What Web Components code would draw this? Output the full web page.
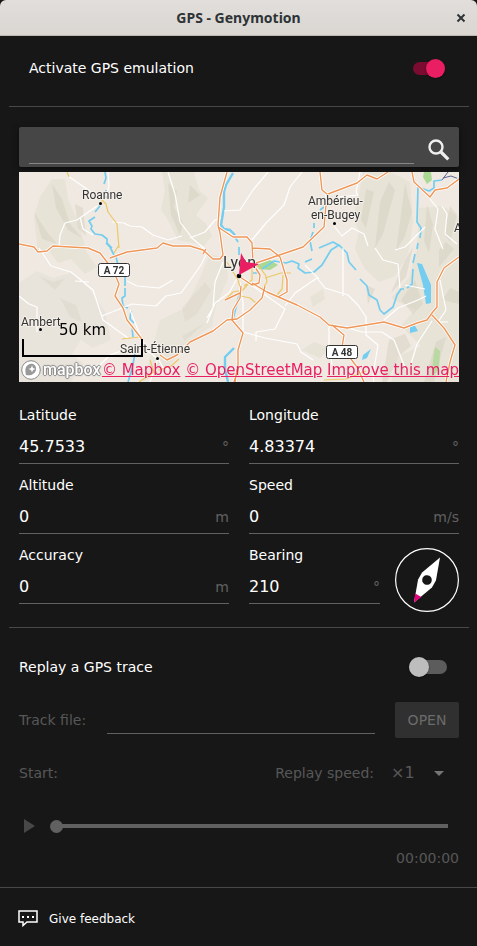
<!DOCTYPE html>
<html lang="en">
<head>
<meta charset="utf-8">
<meta name="viewport" content="width=device-width, initial-scale=1">
<title>GPS - Genymotion</title>
<style>
  body {
    margin: 0;
    background: #171717;
    color: #fff;
    font-family: "DejaVu Sans", sans-serif;
    font-size: 14px;
    line-height: 18px;
  }
</style>
</head>
<body>
<gps-window></gps-window>

<script>
function define(name, html, setup) {
  const template = document.createElement('template')
  template.innerHTML = html

  customElements.define(name, class extends HTMLElement {
    constructor() {
      super()
      this.attachShadow({ mode: 'open' })
        .append(template.content.cloneNode(true))
    }

    connectedCallback() {
      if (setup) setup(this, this.shadowRoot)
    }
  })
}

define('title-bar', `
  <style>
    :host {
      display: grid;
      grid-template-columns: 32px 1fr 32px;
      align-items: center;
      block-size: 36px;
      box-sizing: border-box;
      border-block-end: 1px solid #bfb8b1;
      border-radius: 6px 6px 0 0;
      background: linear-gradient(#e1dedb, #dad6d2);
      color: #2e3436;
    }
    h1 {
      grid-column: 2;
      margin: 0;
      text-align: center;
      font: bold 14px/20px "Noto Sans", sans-serif;
    }
    button {
      display: grid;
      place-items: center;
      block-size: 32px;
      padding: 0;
      border: 0;
      background: none;
      color: inherit;
    }
  </style>
  <h1><slot></slot></h1>
  <button type="button" aria-label="Close">
    <svg width="10" height="10" viewBox="0 0 10 10" stroke="currentColor" stroke-width="2">
      <path d="M1.500 1.500l7 7M8.500 1.500l-7 7"/>
    </svg>
  </button>
`)

define('toggle-switch', `
  <style>
    :host {
      display: flex;
      align-items: center;
      justify-content: space-between;
    }
    input {
      appearance: none;
      position: relative;
      display: flex;
      align-items: center;
      inline-size: 38px;
      block-size: 14px;
      margin: 0;
      border-radius: 7px;
      background: #5c5c5c;
    }
    input::before {
      content: "";
      inline-size: 20px;
      block-size: 20px;
      flex: none;
      border-radius: 50%;
      background: #bdbdbd;
      box-shadow: 0 1px 2px #0006;
    }
    input:checked {
      justify-content: flex-end;
      inline-size: 32px;
      block-size: 13px;
      background: #7b0b30;
    }
    input:checked::before {
      inline-size: 19px;
      block-size: 19px;
      background: #e91e63;
    }
  </style>
  <label for="toggle"><slot></slot></label>
  <input id="toggle" type="checkbox" role="switch">
`, (host, root) => {
  root.querySelector('input').checked = host.hasAttribute('checked')
})

define('search-box', `
  <style>
    :host {
      display: flex;
      gap: 13px;
      block-size: 40px;
      box-sizing: border-box;
      padding: 3px 9px 3px 10px;
      border-radius: 2px;
      background: #464646;
      box-shadow: 0 2px 6px #0008;
    }
    input {
      flex: 1;
      min-inline-size: 0;
      padding: 0;
      border: 0;
      border-block-end: 1px solid #858585;
      background: none;
      color: #fff;
      font: 16px "DejaVu Sans", sans-serif;
      outline: 0;
    }
    button {
      display: flex;
      align-items: flex-end;
      padding: 0 0 3px;
      border: 0;
      background: none;
    }
  </style>
  <input type="search" aria-label="Search a location">
  <button type="button" aria-label="Search">
    <svg width="23" height="23" viewBox="0 0 23 23" fill="none" stroke="#eee">
      <circle cx="9" cy="9" r="6.500" stroke-width="2.400"/>
      <path d="M13.500 13.500l7.800 7.800" stroke-width="3.200"/>
    </svg>
  </button>
`)

define('location-map', `
  <style>
    :host {
      display: block;
      position: relative;
      block-size: 210px;
      overflow: hidden;
      background: #efe9e1;
    }
    .map {
      display: block;
      inline-size: 100%;
      block-size: 100%;
    }
    .scale {
      position: absolute;
      inset: auto auto 25px 3px;
      inline-size: 121px;
      box-sizing: border-box;
      color: #000;
      text-align: center;
      font-size: 15px;
    }
    .scale::after {
      content: "";
      display: block;
      block-size: 16px;
      border: solid #000;
      border-width: 0 2px 2px;
    }
    .logo {
      position: absolute;
      inset: auto auto 2px 2px;
      display: flex;
      align-items: center;
      gap: 2px;
      font: 500 16px/20px Roboto, sans-serif;
      color: #fff;
      text-shadow: 0 0 1px #888, 1px 0 1px #888, -1px 0 1px #888, 0 1px 1px #888, 0 -1px 1px #888;
    }
    .credits {
      position: absolute;
      inset: auto 0 2px auto;
      white-space: nowrap;
      font-size: 15px;
      line-height: 20px;
    }
    a { color: #e91e63; }
  </style>
  <svg class="map" viewBox="19 172 440 210" preserveAspectRatio="xMidYMid slice" fill="none" stroke-linejoin="round">
    <rect x="19" y="172" width="440" height="210" fill="#efe9e1"/>

    <!-- relief -->
    <g fill="#e5e1d5" opacity=".8">
      <path d="M34 217l6-20 12-18h13l3 20 11 26 8 28 10 14-12 7-14-15-13 4-10-14-10 3z"/>
      <path d="M19 283l18-12 16 7 20-6 17 18 15 22 6 28-18 8-12-8-9 14 12 10-13 18H19z" opacity=".7"/>
      <path d="M162 172h32l5 18 9 8-12 17 10 9 6 12-8 10-14-4-12-2-11-22-6-8 4-20z"/>
      <path d="M160 320l25-12 15-30 10-24 16 4 2 20-12 28-4 20-26 18-15 20-28 18z" opacity=".8"/>
      <path d="M363 172h27l20 10 3 40-5 32-13 22-16 6-14-13-10-20 4-18-6-12 6-26z"/>
      <path d="M391 298l18-20 8-30 2-40 24-2 16 12v164h-68l8-26 22-10-20-20 14-16z"/>
      <path d="M310 297l13-8 2 10-12 8zM302 350l12-8 16 6-10 10z"/>
    </g>
    <g fill="#d6d1bf" opacity=".5">
      <path d="M52 184l10 15 8 25 12 14-14-8-12-22zM34 212l13 20 10 12-15-5zM75 204l8 4 3 28-8-8z"/>
      <path d="M168 183l9 8-3 16 9 16-3 12-9-20zM190 185l10 10-12 8z"/>
      <path d="M366 189l8 3-8 36-5-8zM380 202l9-20 6 8-12 44-8 14zM405 184l7 28-7 24-9 15z"/>
      <path d="M427 205l6 20-4 28-5-12zM450 206l7 9-7 27-6-8zM439 250l7-8 8 7-15 18zM405 260l8-13-7 30-15 16zM401 300l14-20 8 24-10 10z"/>
      <path d="M442 300l8-12 9 4v12zM436 342l-12 40h10l12-45zM366 285l9 4-7 15zM389 340l16-6 6 12-12 10-12 26h-5z"/>
      <path d="M182 308l23-26 6 8-14 24-12 8zM182 336l23-13-20 18zM60 298l16 7 6 17-12-5zM39 276l14 6 12-4-10 12z" opacity=".6"/>
    </g>
    <g fill="#a9d992">
      <path d="M257 265l13-5 8 5-8 5-11-1z"/>
      <path d="M424 172h7l1 8-5 4-4-7z"/>
      <path d="M435 347l5 4-1 18-7 8 1-18z" opacity=".7"/>
    </g>

    <!-- water -->
    <g stroke="#73cdf0" stroke-width="1.700">
      <path d="M105 172l1 6-2 6M106 190v8M100 206l-5 6M95 217l-6 4 3 5-1 3 4 5 7 1 5 4v4l5 5M106 243l4 4 4 8M116 257l2 8 4 5 3 6v10M125 288v8l-3 2 1 8 5 2M131 311l-1 8 4 4M132 327l1 10M136 345l-3 20-5 17"/>
      <path d="M233 173l-7 12-2 7v15l-3 18 3 4 6 1 5 5" stroke-width="2.400"/>
      <path d="M235 237l3 5M239 247v8"/>
      <path d="M253 273h6M262 269l12-8 12 2 6-2 7 3-1 4 7 5 9-1 8-7 9-15 8-5 8 8 2 9 7 8M360 279l7 7 2 9 8 5 3 10 4 4 9-7 4-12 4-6h3M407 288l5-4 1-15M413 263l2-9M417 249l1-6M420 238l1-10-4-6 1-35 11 4 5-3v-7l8-1"/>
      <path d="M314 223v5M313 232l-3 9 2 10M305 262l7-3M319 248l14-6 7 4M320 210l4-3"/>
      <path d="M240 294l-4 12-3 12M234 348l-9 9v12l3 13" stroke-width="2.400"/>
    </g>
    <g fill="#73cdf0">
      <path d="M417 263l5 1 9 21v18l-5 1-3-19z"/>
      <path d="M414 324l4 7-8 2v-6zM371 349l-4 9-5 2 1-5z"/>
    </g>
    <path d="M442 180l6-8M443 178l8-2 8 3" stroke="#5d6391"/>

    <!-- minor roads -->
    <g stroke="#fff" stroke-width="1.200">
      <path d="M68 176l32 22M97 206l-20 14-12 3-5 12-1 12M80 217l3 12 10 6M112 222l12 1 6 3 12 1 11 8 15 5 14-4M168 172l7 22 5 28 13 17 12 10M190 238l15-6 10-12 6-2"/>
      <path d="M19 296l10 8 8 3v25M39 248l12 18 20 6 22 18 10 30 25 18M75 281l14 1M102 316l30-12 24 2 10-10 15-3 20-28 5-10M127 281l10 5 22 2 14-8M124 350l-14 5-10 10-16 2"/>
      <path d="M108 172l1 14-3 10M130 310l10 25 8 16 10 8M150 382l8-24 5 10 10 2M239 275l-10 18-14 10-8 20M223 262l-8 20-2 26-6 10"/>
      <path d="M302 172l-12 15-6 18-18 18-14 17M268 172l-15 18-13 20-16 1M360 172l-4 20 2 3-20 2M334 226l8 10 10-8 12 6 4 12"/>
      <path d="M240 282l3 20v30l22 6 32 6 4 8 12 8M250 284l35 25-10 20-19 3v9M285 306l10-13 22-15 8 10 23 7 10 10 8 12v18l12 10-5 30 3 28M305 265l14 14M343 248v48M329 325v20l3 20M337 325l25 7h20l12 8 12 30M384 320l14-12 20-8 8-4M432 321l-15 23-6 20"/>
      <path d="M375 248l8 12 15 4 2 24M395 250l10-3 20-20M430 199l8 10-3 20 8 20M442 206l5 8-2 20 12 10M425 289l-20-4M440 280l6 30-8 12h10"/>
    </g>

    <!-- secondary roads -->
    <g stroke="#edc866" stroke-width="1.200">
      <path d="M67 172l2 5M101 199l5 5 2 8 9 12 2 24M119 245l-5 8M122 339l18-2M139 382l15-10-4-12M159 370l12-4 8-7M227 262l11 18 3 10M251 267l8-1 7 10 1 6-4 6-15-4-5 6-10 2-8 8M252 268v12l-8 6M265 278l16-5h10M283 275l-1 14-5 6M241 296l9 2 6 5M324 380l22-1 20-8"/>
    </g>

    <!-- motorways -->
    <g id="motorways">
      <path d="M19 244l15 3 4 5 9-1 6-5 35 2 12 5 7 9 6 8 6 14-4 12 8 12 4 12 14 18 3 12M110 258l17-6 30-4 6-5 10 3 17 0 13 4 10 9 7 0 3-4-3-22-2-8 2-28 7-25"/>
      <path d="M160 355l7 5 10-5 13-13 23-11 14-11 10-1 13-9 12-12 3-12M218 227l15 10h14l5 6 1 20M252 248l18 1 10 8 7 23v12l-9 5M256 263l47-16 21-20 3-33-5-4-2-18M328 194l29-11 10-8 10 4 11-7"/>
      <path d="M252 283l15 9 30 13 23 12 9 8 18 3 37-6 20 6 13-5 10-3 5-7 5-6v-25l7-14 15-11M432 315l12 13 11 17-5 17-4 20M332 325l12 10-2 12 15 20 7 15M412 172l2 10 16 15 5-7 12-2 12-9"/>
      <path d="M241 286l-1 12-7 12-1 10 11 13-5 17v20l-4 12M253 264l7 11-1 8-7 2-12-8M225 300l15-7M203 254l3-5M235 382l2-13"/>
    </g>

    <g fill="#333" stroke="#f5f0ea" stroke-width="2" paint-order="stroke" font-family="Roboto, sans-serif" font-size="12">
      <text x="82" y="199">Roanne</text>
      <text x="308" y="205">Ambérieu-</text>
      <text x="311" y="219">en-Bugey</text>
      <text x="21" y="326">Ambert</text>
      <text x="120" y="353">Saint-Étienne</text>
      <text x="454" y="232">A</text>
      <text x="223" y="268" font-size="16">Lyon</text>
    </g>
    <g fill="#000">
      <circle cx="100.500" cy="203.500" r="1.500"/>
      <circle cx="334.500" cy="223.500" r="1.500"/>
      <circle cx="40.500" cy="329.500" r="1.500"/>
      <circle cx="157.500" cy="358.500" r="1.500"/>
      <circle cx="239" cy="276" r="2.300"/>
    </g>

    <g fill="#fff" stroke="#333">
      <rect x="98.500" y="263.500" width="31" height="13" rx="2"/>
      <rect x="326.500" y="345.500" width="31" height="13" rx="2"/>
    </g>
    <g fill="#333" font-family="Roboto, sans-serif" font-size="10" font-weight="700" text-anchor="middle">
      <text x="114" y="274">A 72</text>
      <text x="342" y="356">A 48</text>
    </g>

    <path d="M241 253l5 9 13 2-20 11z" fill="#e91e63"/>
  </svg>
  <div class="scale">50 km</div>
  <div class="logo">
    <svg width="20" height="20" viewBox="0 0 20 20" fill="#fff">
      <circle cx="10" cy="10" r="9.300" stroke="#888"/>
      <path d="M5 15c-1-5-1-8 2-10 4-3 9 0 8 5-1 4-5 6-10 5z" fill="#999"/>
      <path d="M11 5.500l1 2.500 2.500 1-2.500 1-1 2.500-1-2.500-2.500-1 2.500-1z"/>
    </svg>
    mapbox
  </div>
  <div class="credits">
    <a href="#mapbox">© Mapbox</a> <a href="#osm">© OpenStreetMap</a> <a href="#improve">Improve this map</a>
  </div>
`, (host, root) => {
  // each motorway is an orange line over a wider white one
  const casing = root.getElementById('motorways')
  const line = casing.cloneNode(true)
  line.removeAttribute('id')
  casing.setAttribute('stroke', '#fff')
  casing.setAttribute('stroke-width', '3')
  line.setAttribute('stroke', '#ee9759')
  line.setAttribute('stroke-width', '1.4')
  casing.after(line)
})

define('value-field', `
  <style>
    :host { display: block; }
    label { display: block; }
    .box {
      display: flex;
      align-items: center;
      block-size: 32px;
      margin-block-start: 7px;
      border-block-end: 1px solid #616161;
    }
    input {
      flex: 1;
      min-inline-size: 0;
      inline-size: 0;
      padding: 0;
      border: 0;
      background: none;
      color: #fff;
      font: 16px/20px "DejaVu Sans", sans-serif;
      outline: 0;
    }
    .unit { color: #616161; }
  </style>
  <label for="value"><slot></slot></label>
  <div class="box">
    <input id="value" inputmode="decimal">
    <span class="unit"></span>
  </div>
`, (host, root) => {
  root.querySelector('input').value = host.getAttribute('value')
  root.querySelector('.unit').textContent = host.getAttribute('unit')
})

define('compass-dial', `
  <style>
    :host { display: block; }
    svg { display: block; }
  </style>
  <svg width="64" height="64" viewBox="-32 -32 64 64">
    <circle r="31.400" fill="none" stroke="#fff" stroke-width="1.200"/>
    <g class="needle">
      <path d="M0-26l8 22v8L0 26l-8-22v-8z" fill="#fff"/>
      <path d="M0-26l3.500 8.500h-7z" fill="#e5007d"/>
      <circle r="4.800" fill="#171717"/>
    </g>
  </svg>
`, (host, root) => {
  root.querySelector('.needle').setAttribute('transform', `rotate(${host.getAttribute('bearing')})`)
})

define('track-player', `
  <style>
    :host {
      display: flex;
      flex-direction: column;
      gap: 17px;
      color: #575757;
    }
    .row {
      display: flex;
      align-items: center;
      block-size: 36px;
    }
    input, select, button {
      margin: 0;
      padding: 0;
      border: 0;
      background: none;
      color: inherit;
      font: inherit;
      opacity: 1;
    }
    .file {
      flex: 1;
      min-inline-size: 0;
      block-size: 27px;
      margin-inline: 21px 20px;
      border-block-end: 1px solid #616161;
    }
    .open {
      inline-size: 64px;
      block-size: 36px;
      border-radius: 2px;
      background: #303030;
      color: #6b6b6b;
    }
    .speed-label { margin-inline: auto 17px; }
    .speed {
      position: relative;
      display: flex;
      align-items: center;
      inline-size: 68px;
    }
    select {
      appearance: none;
      inline-size: 100%;
      font-size: 16px;
    }
    .speed svg {
      position: absolute;
      inset-inline-end: 15px;
      pointer-events: none;
    }
    .play {
      display: flex;
      margin-inline: 5px 15px;
    }
    input[type="range"] {
      appearance: none;
      flex: 1;
      min-inline-size: 0;
      margin-inline-end: 11px;
    }
    input[type="range"]::-webkit-slider-runnable-track {
      block-size: 4px;
      background: linear-gradient(90deg, transparent 6px, #616161 6px);
    }
    input[type="range"]::-webkit-slider-thumb {
      appearance: none;
      inline-size: 13px;
      block-size: 13px;
      margin-block-start: -4px;
      border-radius: 50%;
      background: #616161;
    }
    time {
      margin-block-start: -12px;
      text-align: end;
    }
  </style>
  <div class="row">
    <label for="file">Track file:</label>
    <input class="file" id="file" disabled>
    <button class="open" type="button" disabled>OPEN</button>
  </div>
  <div class="row">
    <span>Start:</span>
    <label class="speed-label" for="speed">Replay speed:</label>
    <div class="speed">
      <select id="speed" disabled><option>×1</option></select>
      <svg width="10" height="5" viewBox="0 0 10 5" fill="#757575"><path d="M0 0h10L5 5z"/></svg>
    </div>
  </div>
  <div class="row">
    <button class="play" type="button" aria-label="Play" disabled>
      <svg width="11" height="14" viewBox="0 0 11 14" fill="#484848"><path d="M0 0l11 7-11 7z"/></svg>
    </button>
    <input type="range" aria-label="Position" value="0" disabled>
  </div>
  <time>00:00:00</time>
`)

define('feedback-bar', `
  <style>
    :host {
      display: flex;
      align-items: center;
      block-size: 59px;
      box-sizing: border-box;
      padding: 3px 18px 0;
      border-block-start: 1px solid #484848;
    }
    a {
      display: flex;
      align-items: center;
      gap: 11px;
      color: #fff;
      font-size: 12px;
      text-decoration: none;
    }
  </style>
  <a href="#feedback">
    <svg width="20" height="17" viewBox="0 0 20 17">
      <path d="M1 1h18v11H9l-4 3.500V12H1z" fill="none" stroke="#fff" stroke-width="1.500"/>
      <path d="M4 6h2v2H4zM9 6h2v2H9zM14 6h2v2h-2z" fill="#fff"/>
    </svg>
    <slot></slot>
  </a>
`)

define('gps-window', `
  <style>
    :host {
      display: flex;
      flex-direction: column;
      min-block-size: 100vh;
    }
    main {
      flex: 1;
      padding-inline: 9px 8px;
    }
    section { padding-inline: 10px; }
    hr {
      block-size: 1px;
      margin: 0;
      border: 0;
      background: #484848;
    }
    .activate {
      block-size: 64px;
      margin-block-end: 6px;
      padding-inline: 20px 24px;
    }
    .location { padding-block: 20px 15px; }
    location-map { margin-block-start: 5px; }
    .fields {
      display: grid;
      grid-template-columns: 1fr 1fr;
      gap: 12px 20px;
      margin-block-start: 24px;
    }
    .bearing {
      display: flex;
      gap: 15px;
    }
    .bearing value-field { flex: 1; }
    compass-dial { padding-block-start: 2px; }
    .replay { padding-block: 20px; }
    .replay toggle-switch {
      block-size: 38px;
      margin-block-end: 16px;
      padding-inline-end: 12px;
    }
  </style>
  <title-bar>GPS - Genymotion</title-bar>
  <main>
    <toggle-switch class="activate" checked>Activate GPS emulation</toggle-switch>
    <hr>
    <section class="location">
      <search-box></search-box>
      <location-map></location-map>
      <div class="fields">
        <value-field value="45.7533" unit="°">Latitude</value-field>
        <value-field value="4.83374" unit="°">Longitude</value-field>
        <value-field value="0" unit="m">Altitude</value-field>
        <value-field value="0" unit="m/s">Speed</value-field>
        <value-field value="0" unit="m">Accuracy</value-field>
        <div class="bearing">
          <value-field value="210" unit="°">Bearing</value-field>
          <compass-dial bearing="210"></compass-dial>
        </div>
      </div>
    </section>
    <hr>
    <section class="replay">
      <toggle-switch>Replay a GPS trace</toggle-switch>
      <track-player></track-player>
    </section>
  </main>
  <feedback-bar>Give feedback</feedback-bar>
`)
</script>
</body>
</html>
